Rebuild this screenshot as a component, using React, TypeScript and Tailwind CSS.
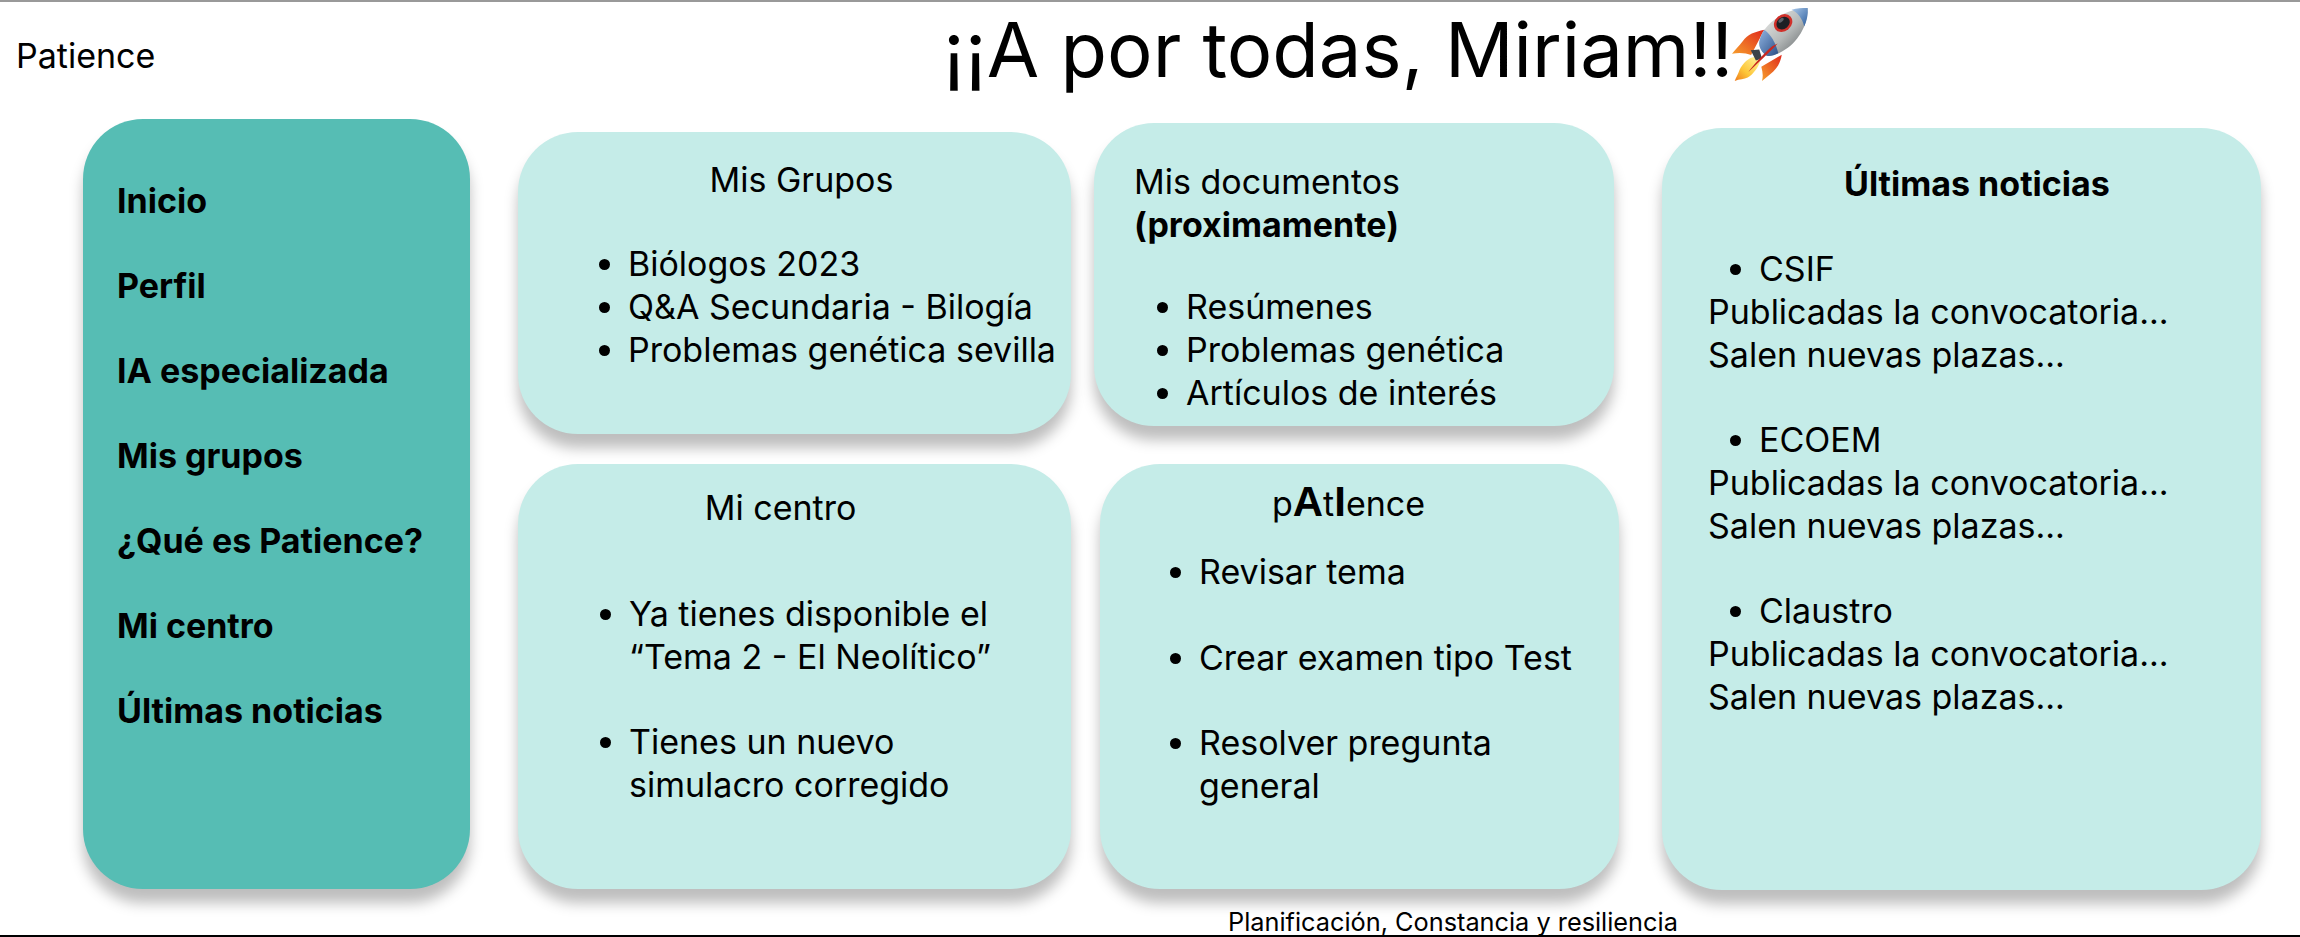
import React from 'react';

const font = "font-['Inter','Noto_Sans',sans-serif]";

const cardClass =
  'bg-[#c5ece8] rounded-[60px] shadow-[0_14px_14px_rgba(0,0,0,0.26)] text-[34px] leading-[43px] text-black';

const Rocket: React.FC = () => (
  <svg viewBox="250 25 226 220" className="w-[77px] h-[75px] -ml-[1px] mt-[5px] shrink-0">
    <defs>
      <linearGradient id="bodyGrad" x1="0" y1="0" x2="1" y2="1">
        <stop offset="0" stopColor="#f4f4f2" />
        <stop offset="0.55" stopColor="#b4b8b8" />
        <stop offset="1" stopColor="#55595c" />
      </linearGradient>
      <linearGradient id="noseGrad" x1="0" y1="0" x2="1" y2="1">
        <stop offset="0" stopColor="#a9c8ea" />
        <stop offset="1" stopColor="#2f5f9e" />
      </linearGradient>
      <linearGradient id="tailGrad" x1="0" y1="0" x2="1" y2="1">
        <stop offset="0" stopColor="#8fb3e0" />
        <stop offset="1" stopColor="#2c4f86" />
      </linearGradient>
      <linearGradient id="finGrad" x1="1" y1="0" x2="0" y2="1">
        <stop offset="0" stopColor="#e0281c" />
        <stop offset="1" stopColor="#f7a02c" />
      </linearGradient>
      <linearGradient id="flameGrad" x1="1" y1="0" x2="0" y2="1">
        <stop offset="0" stopColor="#fff6a0" />
        <stop offset="0.6" stopColor="#fdc638" />
        <stop offset="1" stopColor="#ee7a1c" />
      </linearGradient>
    </defs>
    <path d="M345 92 C318 98 295 105 282 125 C270 140 258 152 250 162 C272 158 292 160 306 166 Z" fill="url(#finGrad)" />
    <path d="M396 165 C392 192 378 210 362 222 L338 242 C342 228 340 214 336 200 Z" fill="url(#finGrad)" />
    <path d="M322 172 C300 170 282 190 272 210 C268 222 262 232 258 242 C272 236 286 238 296 232 C312 222 326 204 332 186 Z" fill="url(#flameGrad)" />
    <path d="M305 152 L330 150 L338 176 L320 182 Z" fill="#3c4248" />
    <path d="M345 92 C370 55 425 28 472 28 C474 75 445 130 398 155 C380 165 365 170 352 168 C338 160 328 142 330 128 C332 115 338 102 345 92 Z" fill="url(#bodyGrad)" />
    <path d="M425 33 C440 29 458 28 472 28 C474 45 470 65 462 82 C456 58 444 42 425 33 Z" fill="url(#noseGrad)" />
    <path d="M345 92 C338 102 332 115 330 128 C328 142 338 160 352 168 C362 170 374 167 386 161 C378 130 364 106 345 92 Z" fill="url(#tailGrad)" />
    <ellipse cx="400" cy="72" rx="29" ry="24" transform="rotate(-40 400 72)" fill="#d0302a" />
    <ellipse cx="400" cy="72" rx="21" ry="17" transform="rotate(-40 400 72)" fill="#1d1f24" />
    <ellipse cx="394" cy="64" rx="9" ry="5" transform="rotate(-40 394 64)" fill="#5c6068" />
    <path d="M384 132 C368 150 340 176 298 216 C312 196 344 160 368 140 Z" fill="#c9281f" />
  </svg>
);

const NavItems = ['Inicio', 'Perfil', 'IA especializada', 'Mis grupos', '¿Qué es Patience?', 'Mi centro', 'Últimas noticias'];

const News = [
  { name: 'CSIF' },
  { name: 'ECOEM' },
  { name: 'Claustro' },
];

const App: React.FC = () => {
  return (
    <div className={`${font} relative h-[937px] w-[2300px] overflow-hidden bg-white border-t-2 border-[#999999] text-black`}>
      {/* cabecera */}
      <div className="flex items-start h-[117px]">
        <p className="ml-[16px] mt-[32px] w-[927px] text-[34px] leading-[43px]">Patience</p>
        <div className="flex items-start">
          <h1 className="text-[76px] leading-[87px] mt-[4px] whitespace-nowrap">¡¡A por todas, Miriam!!</h1>
          <Rocket />
        </div>
      </div>

      <div className="flex items-start pl-[83px]">
        {/* menu lateral */}
        <nav className="w-[387px] h-[770px] bg-[#56bdb4] rounded-[60px] shadow-[0_14px_14px_rgba(0,0,0,0.26)] pl-[34px] pt-[60px] flex flex-col gap-[42px]">
          {NavItems.map(item => (
            <p key={item} className="text-[34px] leading-[43px] font-bold">{item}</p>
          ))}
        </nav>

        {/* columna grupos / centro */}
        <div className="ml-[48px] w-[553px] pt-[13px] flex flex-col gap-[30px]">
          <section className={`${cardClass} h-[302px] pt-[26px]`}>
            <h2 className="text-center pl-[14px]">Mis Grupos</h2>
            <ul className="list-disc pl-[110px] mt-[41px] whitespace-nowrap">
              <li>Biólogos 2023</li>
              <li>Q&amp;A Secundaria - Bilogía</li>
              <li>Problemas genética sevilla</li>
            </ul>
          </section>
          <section className={`${cardClass} h-[425px] pt-[22px]`}>
            <h2 className="text-center pr-[28px]">Mi centro</h2>
            <ul className="list-disc pl-[111px] mt-[63px] pr-[60px]">
              <li>Ya tienes disponible el “Tema 2 - El Neolítico”</li>
              <li className="mt-[42px]">Tienes un nuevo simulacro corregido</li>
            </ul>
          </section>
        </div>

        {/* columna documentos / patience */}
        <div className="ml-[23px] w-[525px] pt-[4px] flex flex-col gap-[38px]">
          <section className={`${cardClass} w-[520px] h-[303px] pt-[37px]`}>
            <h2 className="pl-[40px]">
              Mis documentos
              <br />
              <b>(proximamente)</b>
            </h2>
            <ul className="list-disc pl-[92px] mt-[39px] whitespace-nowrap">
              <li>Resúmenes</li>
              <li>Problemas genética</li>
              <li>Artículos de interés</li>
            </ul>
          </section>
          <section className={`${cardClass} ml-[6px] w-[519px] h-[425px] pt-[16px]`}>
            <h2 className="text-center pr-[22px]">
              p<b className="font-['Liberation_Sans',sans-serif] text-[42px]">A</b>t<b className="font-['Liberation_Sans',sans-serif] text-[42px]">I</b>ence
            </h2>
            <ul className="list-disc pl-[99px] mt-[25px] pr-[40px]">
              <li>Revisar tema</li>
              <li className="mt-[43px]">Crear examen tipo Test</li>
              <li className="mt-[42px]">Resolver pregunta general</li>
            </ul>
          </section>
        </div>

        {/* ultimas noticias */}
        <section className={`${cardClass} ml-[43px] mt-[9px] w-[599px] h-[762px] pt-[34px] pl-[46px]`}>
          <h2 className="font-bold pl-[136px]">Últimas noticias</h2>
          <div className="mt-[42px] flex flex-col gap-[42px]">
            {News.map(n => (
              <div key={n.name}>
                <ul className="list-disc pl-[51px]">
                  <li>{n.name}</li>
                </ul>
                <p>Publicadas la convocatoria...</p>
                <p>Salen nuevas plazas...</p>
              </div>
            ))}
          </div>
        </section>
      </div>

      {/* pie */}
      <p className="absolute left-[1228px] top-[905px] text-[25.3px] leading-[30px] whitespace-nowrap">Planificación, Constancia y resiliencia</p>
      <div className="absolute left-0 right-0 bottom-0 h-[2px] bg-black" />
    </div>
  );
};

export default App;
